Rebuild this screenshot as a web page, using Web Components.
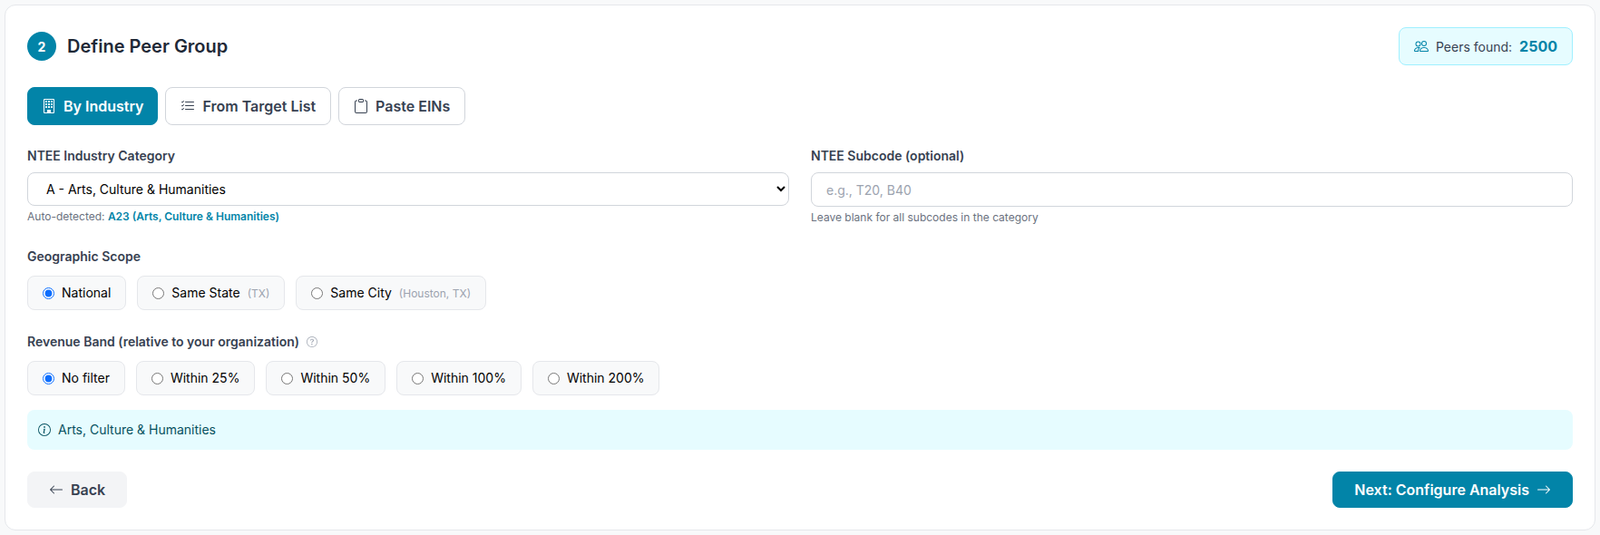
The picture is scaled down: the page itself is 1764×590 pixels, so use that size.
<!DOCTYPE html>
<html>
<head>
<meta charset="utf-8">
<title>Define Peer Group</title>
<style>
  html, body { margin: 0; background: #f8f9fa; }
  body { padding: 5px; font-family: Inter, "Liberation Sans", sans-serif; }
</style>
</head>
<body>

<template id="icons">
  <svg data-name="building" viewBox="0 0 16 16" fill="currentColor"><path d="M4 2.5a.5.5 0 0 1 .5-.5h1a.5.5 0 0 1 .5.5v1a.5.5 0 0 1-.5.5h-1a.5.5 0 0 1-.5-.5zm3 0a.5.5 0 0 1 .5-.5h1a.5.5 0 0 1 .5.5v1a.5.5 0 0 1-.5.5h-1a.5.5 0 0 1-.5-.5zm3.500-.5a.5.5 0 0 0-.5.5v1a.5.5 0 0 0 .5.5h1a.5.5 0 0 0 .5-.5v-1a.5.5 0 0 0-.5-.5zM4 5.500a.5.5 0 0 1 .5-.5h1a.5.5 0 0 1 .5.5v1a.5.5 0 0 1-.5.5h-1a.5.5 0 0 1-.5-.5zM7.500 5a.5.5 0 0 0-.5.5v1a.5.5 0 0 0 .5.5h1a.5.5 0 0 0 .5-.5v-1a.5.5 0 0 0-.5-.5zm2.500.5a.5.5 0 0 1 .5-.5h1a.5.5 0 0 1 .5.5v1a.5.5 0 0 1-.5.5h-1a.5.5 0 0 1-.5-.5zM4.500 8a.5.5 0 0 0-.5.5v1a.5.5 0 0 0 .5.5h1a.5.5 0 0 0 .5-.5v-1a.5.5 0 0 0-.5-.5zm2.500.5a.5.5 0 0 1 .5-.5h1a.5.5 0 0 1 .5.5v1a.5.5 0 0 1-.5.5h-1a.5.5 0 0 1-.5-.5zm3.500-.5a.5.5 0 0 0-.5.5v1a.5.5 0 0 0 .5.5h1a.5.5 0 0 0 .5-.5v-1a.5.5 0 0 0-.5-.5z"/><path d="M2 1a1 1 0 0 1 1-1h10a1 1 0 0 1 1 1v14a1 1 0 0 1-1 1H3a1 1 0 0 1-1-1zm11 0H3v14h3v-2.500a.5.5 0 0 1 .5-.5h3a.5.5 0 0 1 .5.5V15h3z"/></svg>
  <svg data-name="list-check" viewBox="0 0 16 16" fill="currentColor"><path fill-rule="evenodd" d="M5 11.500a.5.5 0 0 1 .5-.5h9a.5.5 0 0 1 0 1h-9a.5.5 0 0 1-.5-.5m0-4a.5.5 0 0 1 .5-.5h9a.5.5 0 0 1 0 1h-9a.5.5 0 0 1-.5-.5m0-4a.5.5 0 0 1 .5-.5h9a.5.5 0 0 1 0 1h-9a.5.5 0 0 1-.5-.5M3.854 2.146a.5.5 0 0 1 0 .708l-1.500 1.500a.5.5 0 0 1-.708 0l-.5-.5a.5.5 0 1 1 .708-.708L2 3.293l1.146-1.147a.5.5 0 0 1 .708 0m0 4a.5.5 0 0 1 0 .708l-1.500 1.500a.5.5 0 0 1-.708 0l-.5-.5a.5.5 0 1 1 .708-.708L2 7.293l1.146-1.147a.5.5 0 0 1 .708 0m0 4a.5.5 0 0 1 0 .708l-1.500 1.500a.5.5 0 0 1-.708 0l-.5-.5a.5.5 0 0 1 .708-.708l.146.147 1.146-1.147a.5.5 0 0 1 .708 0"/></svg>
  <svg data-name="clipboard" viewBox="0 0 16 16" fill="currentColor"><path d="M4 1.500H3a2 2 0 0 0-2 2V14a2 2 0 0 0 2 2h10a2 2 0 0 0 2-2V3.500a2 2 0 0 0-2-2h-1v1h1a1 1 0 0 1 1 1V14a1 1 0 0 1-1 1H3a1 1 0 0 1-1-1V3.500a1 1 0 0 1 1-1h1z"/><path d="M9.500 1a.5.5 0 0 1 .5.5v1a.5.5 0 0 1-.5.5h-3a.5.5 0 0 1-.5-.5v-1a.5.5 0 0 1 .5-.5zm-3-1A1.500 1.500 0 0 0 5 1.500v1A1.500 1.500 0 0 0 6.500 4h3A1.500 1.500 0 0 0 11 2.500v-1A1.500 1.500 0 0 0 9.500 0z"/></svg>
  <svg data-name="people" viewBox="0 0 16 16" fill="currentColor"><path d="M15 14s1 0 1-1-1-4-5-4-5 3-5 4 1 1 1 1zm-7.978-1L7 12.996c.001-.264.167-1.030.760-1.720C8.312 10.629 9.282 10 11 10c1.717 0 2.687.63 3.240 1.276.593.69.758 1.457.76 1.720l-.008.002-.014.002zM11 7a2 2 0 1 0 0-4 2 2 0 0 0 0 4m3-2a3 3 0 1 1-6 0 3 3 0 0 1 6 0M6.936 9.280a6 6 0 0 0-1.230-.247A7 7 0 0 0 5 9c-4 0-5 3-5 4q0 1 1 1h4.216A2.240 2.240 0 0 1 5 13c0-1.010.377-2.042 1.090-2.904.243-.294.526-.569.846-.816M4.920 10A5.500 5.500 0 0 0 4 13H1c0-.26.164-1.030.76-1.724.545-.636 1.492-1.256 3.160-1.275ZM1.500 5.500a3 3 0 1 1 6 0 3 3 0 0 1-6 0m3-2a2 2 0 1 0 0 4 2 2 0 0 0 0-4"/></svg>
  <svg data-name="info" viewBox="0 0 16 16" fill="currentColor"><path d="M8 15A7 7 0 1 1 8 1a7 7 0 0 1 0 14m0 1A8 8 0 1 0 8 0a8 8 0 0 0 0 16"/><path d="m8.930 6.588-2.290.287-.082.380.450.083c.294.070.352.176.288.469l-.738 3.468c-.194.897.105 1.319.808 1.319.545 0 1.178-.252 1.465-.598l.088-.416c-.2.176-.492.246-.686.246-.275 0-.375-.193-.304-.533zM9 4.500a1 1 0 1 1-2 0 1 1 0 0 1 2 0"/></svg>
  <svg data-name="question" viewBox="0 0 16 16" fill="currentColor"><path d="M8 15A7 7 0 1 1 8 1a7 7 0 0 1 0 14m0 1A8 8 0 1 0 8 0a8 8 0 0 0 0 16"/><path d="M5.255 5.786a.237.237 0 0 0 .241.247h.825c.138 0 .248-.113.266-.25.09-.656.54-1.134 1.342-1.134.686 0 1.314.343 1.314 1.168 0 .635-.374.927-.965 1.371-.673.489-1.206 1.060-1.168 1.987l.003.217a.25.25 0 0 0 .25.246h.811a.25.25 0 0 0 .25-.25v-.105c0-.718.273-.927 1.010-1.486.609-.463 1.244-.977 1.244-2.056 0-1.511-1.276-2.241-2.673-2.241-1.267 0-2.655.59-2.750 2.286m1.557 5.763c0 .533.425.927 1.010.927.609 0 1.028-.394 1.028-.927 0-.552-.42-.94-1.029-.94-.584 0-1.009.388-1.009.94"/></svg>
  <svg data-name="arrow-left" viewBox="0 0 16 16" fill="currentColor"><path fill-rule="evenodd" d="M15 8a.5.5 0 0 0-.5-.5H2.707l3.147-3.146a.5.5 0 1 0-.708-.708l-4 4a.5.5 0 0 0 0 .708l4 4a.5.5 0 0 0 .708-.708L2.707 8.500H14.500A.5.500 0 0 0 15 8"/></svg>
  <svg data-name="arrow-right" viewBox="0 0 16 16" fill="currentColor"><path fill-rule="evenodd" d="M1 8a.5.5 0 0 1 .5-.5h11.793l-3.147-3.146a.5.5 0 0 1 .708-.708l4 4a.5.5 0 0 1 0 .708l-4 4a.5.5 0 0 1-.708-.708L13.293 8.500H1.500A.5.500 0 0 1 1 8"/></svg>
</template>

<peer-group-step></peer-group-step>

<script>
  customElements.define('ui-icon',
    class extends HTMLElement {
      constructor () {
        super()
        this.attachShadow({ mode: 'open' })
      }

      connectedCallback () {
        const size = this.getAttribute('size') || 16
        const src = document.querySelector('#icons').content.querySelector(`[data-name="${this.getAttribute('name')}"]`)
        this.shadowRoot.innerHTML = `<style>
          :host { display: inline-flex; width: ${size}px; height: ${size}px; flex: none; }
          svg { width: 100%; height: 100%; display: block; }
        </style>`
        this.shadowRoot.append(src.cloneNode(true))
      }
    })

  customElements.define('ui-button',
    class extends HTMLElement {
      constructor () {
        super()
        this.attachShadow({ mode: 'open' })
        this.shadowRoot.innerHTML = `<style>
          :host {
            display: inline-flex;
            align-items: center;
            box-sizing: border-box;
            height: 42px;
            padding: 0 15px;
            gap: 8px;
            border-radius: 8px;
            font-size: 16px;
            font-weight: 600;
            white-space: nowrap;
            cursor: pointer;
            border: 1px solid transparent;
          }
          :host([kind="primary"]) { background: #0284a8; color: #fff; border-color: #0284a8; }
          :host([kind="outline"]) { background: #fff; color: #374151; border-color: #d1d5db; padding: 0 16px; }
          :host([kind="ghost"]) { background: #f3f4f6; color: #374151; border-color: #f3f4f6; }
          :host([wide]) { height: 40px; padding: 0 23px; }
        </style><slot></slot>`
      }
    })

  customElements.define('radio-pill',
    class extends HTMLElement {
      constructor () {
        super()
        this.attachShadow({ mode: 'open' })
      }

      connectedCallback () {
        const checked = this.hasAttribute('checked') ? 'checked' : ''
        const hint = this.getAttribute('hint')
        this.shadowRoot.innerHTML = `<style>
          :host {
            display: inline-flex;
            align-items: center;
            box-sizing: border-box;
            height: 38px;
            padding: 0 16px;
            background: #f8f9fa;
            border: 1px solid #e5e7eb;
            border-radius: 8px;
            font-size: 14px;
            color: #000;
            white-space: nowrap;
          }
          input { margin: 0 8px 0 0; width: 13px; height: 13px; accent-color: #0d6efd; }
          .txt { margin-bottom: 2px; }
          small { font-size: 12px; color: #9ca3af; margin-left: 8px; }
        </style>
        <input type="radio" ${checked} tabindex="-1"><span class="txt"><slot></slot>${hint ? `<small>${hint}</small>` : ''}</span>`
      }
    })

  customElements.define('form-field',
    class extends HTMLElement {
      constructor () {
        super()
        this.attachShadow({ mode: 'open' })
        this.shadowRoot.innerHTML = `<style>
          :host { display: block; min-width: 0; }
          label { display: block; font-size: 14px; line-height: 21px; font-weight: 600; color: #374151; margin-bottom: 8px; }
          ::slotted([slot="help"]) { display: block; font-size: 12px; line-height: 18px; color: #6b7280; margin-top: 3px; margin-bottom: -1px; }
        </style>
        <label><slot name="label"></slot></label><slot></slot><slot name="help"></slot>`
      }
    })

  customElements.define('peer-group-step',
    class extends HTMLElement {
      constructor () {
        super()
        this.attachShadow({ mode: 'open' })
      }

      connectedCallback () {
        this.shadowRoot.innerHTML = `<style>
          :host {
            display: block;
            box-sizing: border-box;
            width: 1754px;
            height: 580px;
            padding: 24px;
            background: #fff;
            border: 1px solid #e5e7eb;
            border-radius: 12px;
            color: #1f2937;
            font-family: Inter, "Liberation Sans", sans-serif;
          }
          .head { display: flex; justify-content: space-between; align-items: center; height: 42px; }
          .title { display: flex; align-items: center; gap: 12px; }
          .num {
            width: 32px; height: 32px; border-radius: 50%;
            background: #0284a8; color: #fff;
            display: flex; align-items: center; justify-content: center;
            font-size: 14px; font-weight: 700;
          }
          h2 { margin: 0; font-size: 20px; font-weight: 600; color: #1f2937; }
          .chip {
            display: flex; align-items: center; gap: 8px;
            box-sizing: border-box; height: 42px; padding: 0 16px;
            background: #e6fcff; border: 1px solid #a0f0ff; border-radius: 8px;
            font-size: 14px; color: #374151;
          }
          .chip ui-icon { color: #0284a8; }
          .chip b { font-size: 16px; font-weight: 700; color: #0284a8; }
          .tabs { display: flex; gap: 8px; margin-top: 24px; }
          .row { display: grid; grid-template-columns: 1fr 1fr; gap: 24px; margin-top: 23px; }
          select, input.text {
            display: block; width: 100%; box-sizing: border-box; height: 38px;
            border: 1px solid #d1d5db; border-radius: 8px; background: #fff;
            font: 14px Inter, "Liberation Sans", sans-serif; color: #000;
          }
          select { padding: 0 12px; height: 37px; margin-bottom: 1px; }
          input.text { padding: 0 16px; }
          input.text::placeholder { color: #9ca3af; }
          .help-accent { color: #0284a8; font-weight: 600; }
          .group { margin-top: 24px; }
          .group .lbl { display: flex; align-items: center; gap: 8px; font-size: 14px; line-height: 21px; font-weight: 600; color: #374151; margin-bottom: 11px; }
          .group .lbl ui-icon { color: #9ca3af; }
          .pills { display: flex; gap: 12px; }
          .info {
            display: flex; align-items: center; gap: 8px;
            box-sizing: border-box; height: 44px; padding: 0 12px; margin-top: 16px;
            background: #e6fcff; border-radius: 8px;
            font-size: 14px; color: #055160;
          }
          .info span { margin-bottom: 2px; }
          .foot { display: flex; justify-content: space-between; margin-top: 24px; }
        </style>
        <div class="head">
          <div class="title"><span class="num">2</span><h2>Define Peer Group</h2></div>
          <div class="chip"><ui-icon name="people"></ui-icon><span>Peers found:</span><b>2500</b></div>
        </div>
        <div class="tabs">
          <ui-button kind="primary"><ui-icon name="building"></ui-icon>By Industry</ui-button>
          <ui-button kind="outline"><ui-icon name="list-check"></ui-icon>From Target List</ui-button>
          <ui-button kind="outline"><ui-icon name="clipboard"></ui-icon>Paste EINs</ui-button>
        </div>
        <div class="row">
          <form-field>
            <span slot="label">NTEE Industry Category</span>
            <select tabindex="-1"><option>&nbsp;A - Arts, Culture &amp; Humanities</option></select>
            <span slot="help">Auto-detected: <span class="help-accent">A23 (Arts, Culture &amp; Humanities)</span></span>
          </form-field>
          <form-field>
            <span slot="label">NTEE Subcode (optional)</span>
            <input class="text" placeholder="e.g., T20, B40" tabindex="-1">
            <span slot="help">Leave blank for all subcodes in the category</span>
          </form-field>
        </div>
        <div class="group">
          <div class="lbl">Geographic Scope</div>
          <div class="pills">
            <radio-pill checked>National</radio-pill>
            <radio-pill hint="(TX)">Same State</radio-pill>
            <radio-pill hint="(Houston, TX)">Same City</radio-pill>
          </div>
        </div>
        <div class="group">
          <div class="lbl">Revenue Band (relative to your organization) <ui-icon name="question" size="12"></ui-icon></div>
          <div class="pills">
            <radio-pill checked>No filter</radio-pill>
            <radio-pill>Within 25%</radio-pill>
            <radio-pill>Within 50%</radio-pill>
            <radio-pill>Within 100%</radio-pill>
            <radio-pill>Within 200%</radio-pill>
          </div>
        </div>
        <div class="info"><ui-icon name="info" size="14"></ui-icon><span>Arts, Culture &amp; Humanities</span></div>
        <div class="foot">
          <ui-button kind="ghost" wide><ui-icon name="arrow-left"></ui-icon>Back</ui-button>
          <ui-button kind="primary" wide><span>Next: Configure Analysis</span><ui-icon name="arrow-right"></ui-icon></ui-button>
        </div>`
      }
    })
</script>
</body>
</html>
